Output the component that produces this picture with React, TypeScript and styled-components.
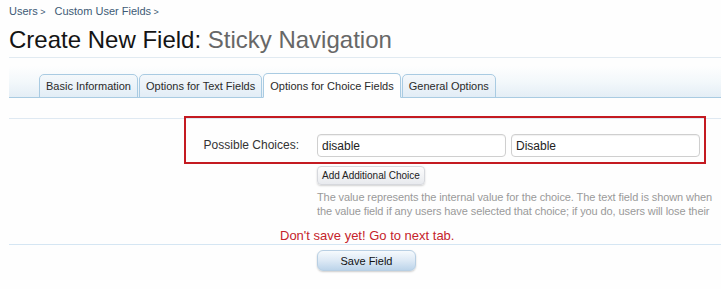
import React from 'react';
import styled, {createGlobalStyle} from 'styled-components';

const GlobalStyle = createGlobalStyle`
    html, body {
        margin: 0;
        padding: 0;
        background: #fefefe;
        overflow: hidden;
    }
    body {
        font-family: "Liberation Sans", Arial, sans-serif;
        color: #222;
    }
`;

const Page = styled.div`
    width: 721px;
    height: 289px;
    padding-left: 9px;
    box-sizing: border-box;
`;

const Breadcrumb = styled.div`
    display: flex;
    gap: 9px;
    padding-top: 5px;
    height: 13px;
    font-size: 11px;
    line-height: 13px;
    color: #3d5a75;
`;

const Crumb = styled.span`
    &::after {
        content: ' >';
        font-size: 9px;
    }
`;

const Title = styled.h1`
    margin: 0;
    padding: 10px 0 6px;
    height: 23px;
    font-size: 24px;
    line-height: 23px;
    font-weight: normal;
    color: #141414;
    border-bottom: 1px solid #e1eaf1;
`;

const Subject = styled.span`
    color: #676767;
`;

const TabStrip = styled.div`
    display: flex;
    align-items: flex-end;
    margin-top: 8px;
    height: 31px;
    padding-left: 30px;
    background: linear-gradient(to bottom, #fefefe 0%, #f3f8fb 50%, #e4eef6 100%);
    border-bottom: 1px solid #a9cbe2;
`;

const Tab = styled.div<{ $active?: boolean }>`
    margin-right: 1px;
    margin-bottom: -1px;
    padding: 0 6px;
    display: flex;
    align-items: center;
    font-size: 11px;
    color: #2a2a2a;
    border: 1px solid #a9cbe2;
    border-bottom: ${props => props.$active ? '1px solid #fefefe' : '1px solid #a9cbe2'};
    border-radius: 5px 5px 0 0;
    background: ${props => props.$active ? '#fefefe' : 'linear-gradient(to bottom, #f4f8fb, #e2edf6)'};
    height: ${props => props.$active ? '23px' : '22px'};
`;

const FormTop = styled.div`
    margin-top: 20px;
    border-top: 1px solid #dfe9f2;
`;

const Row = styled.div`
    position: relative;
    display: grid;
    grid-template-columns: 296px 1fr;
    column-gap: 12px;
    padding-top: 15px;
`;

const Label = styled.div`
    text-align: right;
    padding-right: 6px;
    padding-top: 4px;
    font-size: 12px;
    color: #333;
`;

const Inputs = styled.div`
    display: flex;
    gap: 5px;
`;

const TextBox = styled.input`
    width: 189px;
    height: 23px;
    box-sizing: border-box;
    padding: 2px 4px;
    font-family: "Liberation Sans", Arial, sans-serif;
    font-size: 12px;
    color: #222;
    background: #fff;
    border: 1px solid #cfcfcf;
    border-radius: 4px;
    box-shadow: inset 0 1px 1px rgba(0, 0, 0, 0.06);
    outline: none;
`;

const RedFrame = styled.div`
    position: absolute;
    left: 175px;
    top: -3px;
    width: 518px;
    height: 44px;
    border: 2px solid #c41a21;
    pointer-events: none;
`;

const Controls = styled.div`
    padding-left: 308px;
    padding-top: 8px;
`;

const SmallButton = styled.button`
    height: 19px;
    padding: 0 4px;
    font-family: "Liberation Sans", Arial, sans-serif;
    font-size: 10px;
    color: #222;
    background: linear-gradient(to bottom, #fdfdfd, #e8eaee);
    border: 1px solid #d6d8dd;
    border-radius: 4px;
    box-shadow: 0 1px 2px rgba(0, 0, 0, 0.18);
`;

const Hint = styled.div`
    margin-top: 5px;
    font-size: 11px;
    line-height: 14px;
    letter-spacing: -0.1px;
    color: #9a9a9a;
    white-space: nowrap;
`;

const HintLine = styled.div``;

const Warning = styled.div`
    padding-left: 271px;
    margin-top: 10px;
    font-size: 13px;
    line-height: 16px;
    color: #c5232b;
`;

const Footer = styled.div`
    margin-top: 0;
    padding-top: 5px;
    padding-left: 308px;
    border-top: 1px solid #d5e6f3;
`;

const SaveButton = styled.button`
    width: 99px;
    height: 21px;
    font-family: "Liberation Sans", Arial, sans-serif;
    font-size: 11px;
    color: #111;
    background: linear-gradient(to bottom, #f6fafd 0%, #dde9f5 50%, #bcd4ea 100%);
    border: 1px solid #b8cfe3;
    border-radius: 6px;
    box-shadow: 0 1px 2px rgba(0, 0, 0, 0.2);
`;

const App: React.FC = () => {
    return (
        <>
            <GlobalStyle/>
            <Page>
                <Breadcrumb>
                    <Crumb>Users</Crumb>
                    <Crumb>Custom User Fields</Crumb>
                </Breadcrumb>
                <Title>Create New Field: <Subject>Sticky Navigation</Subject></Title>
                <TabStrip>
                    <Tab>Basic Information</Tab>
                    <Tab>Options for Text Fields</Tab>
                    <Tab $active>Options for Choice Fields</Tab>
                    <Tab>General Options</Tab>
                </TabStrip>
                <FormTop>
                    <Row>
                        <Label>Possible Choices:</Label>
                        <Inputs>
                            <TextBox defaultValue="disable"/>
                            <TextBox defaultValue="Disable"/>
                        </Inputs>
                        <RedFrame/>
                    </Row>
                    <Controls>
                        <SmallButton>Add Additional Choice</SmallButton>
                        <Hint>
                            <HintLine>The value represents the internal value for the choice. The text field is shown when</HintLine>
                            <HintLine>the value field if any users have selected that choice; if you do, users will lose their</HintLine>
                        </Hint>
                    </Controls>
                    <Warning>Don't save yet! Go to next tab.</Warning>
                </FormTop>
                <Footer>
                    <SaveButton>Save Field</SaveButton>
                </Footer>
            </Page>
        </>
    );
};

export default App;
